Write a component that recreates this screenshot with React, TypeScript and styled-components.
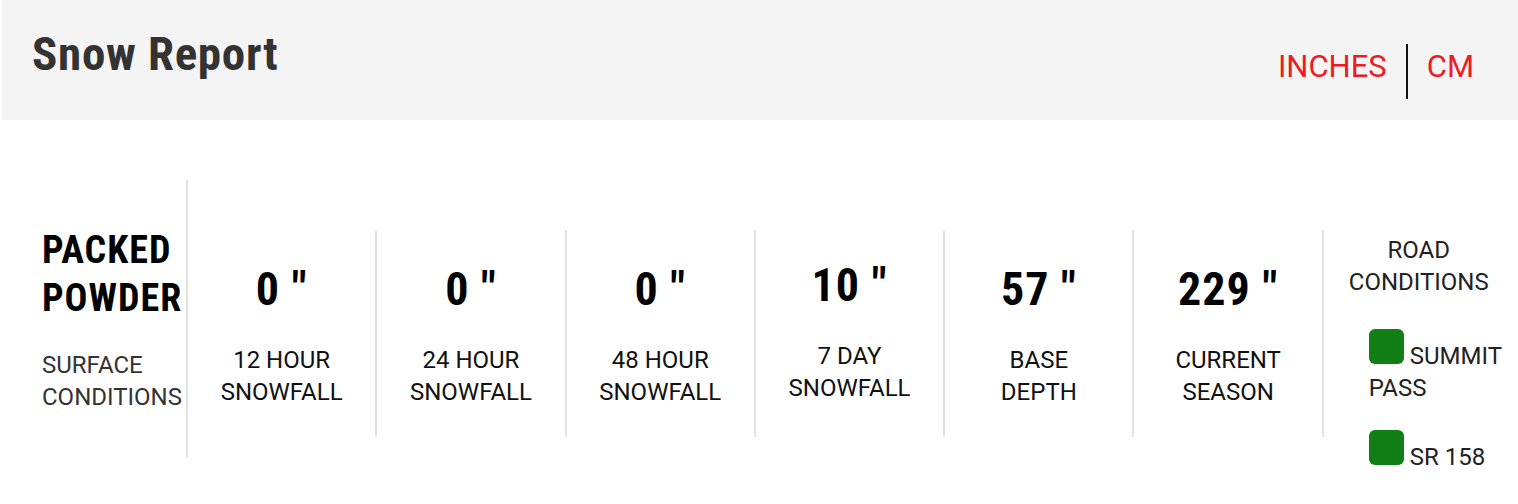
import styled, { createGlobalStyle } from 'styled-components';

const GlobalStyle = createGlobalStyle`
    body {
        margin: 0;
        background: #fff;
        font-family: Roboto, 'Liberation Sans', sans-serif;
    }
`;

const CONDENSED = `'Roboto Condensed', 'Liberation Sans Narrow', Roboto, sans-serif`;

type Stat = { value: string; label: string[]; lift?: boolean };

const STATS: Stat[] = [
    { value: '0 "', label: ['12 HOUR', 'SNOWFALL'] },
    { value: '0 "', label: ['24 HOUR', 'SNOWFALL'] },
    { value: '0 "', label: ['48 HOUR', 'SNOWFALL'] },
    { value: '10 "', label: ['7 DAY', 'SNOWFALL'], lift: true },
    { value: '57 "', label: ['BASE', 'DEPTH'] },
    { value: '229 "', label: ['CURRENT', 'SEASON'] },
];

const ROADS = [
    { name: 'SUMMIT PASS', open: true },
    { name: 'SR 158', open: true },
];

export default function App() {
    return (
        <Page>
            <GlobalStyle />
            <Header>
                <Title>Snow Report</Title>
                <Units>
                    <UnitLink>INCHES</UnitLink>
                    <UnitDivider />
                    <UnitLink>CM</UnitLink>
                </Units>
            </Header>
            <StatsRow>
                <SurfaceCol>
                    <Surface>
                        PACKED
                        <br />
                        POWDER
                    </Surface>
                    <SurfaceLabel>
                        SURFACE
                        <br />
                        CONDITIONS
                    </SurfaceLabel>
                </SurfaceCol>
                {STATS.map((s) => (
                    <StatCol key={s.label.join(' ')} $lift={s.lift}>
                        <Value>{s.value}</Value>
                        <Label>
                            {s.label[0]}
                            <br />
                            {s.label[1]}
                        </Label>
                    </StatCol>
                ))}
                <RoadCol>
                    <Label>
                        ROAD
                        <br />
                        CONDITIONS
                    </Label>
                    <RoadList>
                        {ROADS.map((r) => (
                            <RoadItem key={r.name}>
                                <Status $open={r.open} /> {r.name}
                            </RoadItem>
                        ))}
                    </RoadList>
                </RoadCol>
            </StatsRow>
        </Page>
    );
}

const Page = styled.div`
    width: 1518px;
    padding-left: 2px;
    box-sizing: border-box;
`;

const Header = styled.header`
    height: 120px;
    background: #f4f4f4;
    display: flex;
    justify-content: space-between;
    align-items: flex-start;
    padding: 26px 44px 0 30px;
    box-sizing: border-box;
`;

const Title = styled.h1`
    margin: 0;
    font-family: ${CONDENSED};
    font-weight: 700;
    font-size: 47px;
    letter-spacing: 0.7px;
    color: #333;
`;

const Units = styled.div`
    display: flex;
    align-items: flex-start;
    gap: 19px;
    margin-top: 18px;
`;

const UnitLink = styled.a`
    font-size: 31px;
    color: #ec1c24;
    padding-top: 4px;
    cursor: pointer;
`;

const UnitDivider = styled.span`
    width: 2px;
    height: 55px;
    background: #111;
`;

const StatsRow = styled.section`
    display: flex;
    align-items: flex-start;
    margin-top: 60px;
`;

const SurfaceCol = styled.div`
    width: 186px;
    height: 277px;
    box-sizing: border-box;
    padding: 46px 0 0 40px;
    border-right: 2px solid #e2e2e2;
`;

const Surface = styled.div`
    font-family: ${CONDENSED};
    font-weight: 700;
    font-size: 38px;
    line-height: 48px;
    letter-spacing: 1px;
    color: #000;
`;

const SurfaceLabel = styled.div`
    margin-top: 27px;
    font-size: 24px;
    line-height: 32px;
    color: #333;
`;

const StatCol = styled.div<{ $lift?: boolean }>`
    width: 189.3px;
    height: 207px;
    margin-top: 50px;
    box-sizing: border-box;
    border-right: 2px solid #e2e2e2;
    text-align: center;
    padding-top: ${({ $lift }) => ($lift ? 29 : 33)}px;
`;

const Value = styled.div`
    font-family: ${CONDENSED};
    font-weight: 700;
    font-size: 46px;
    line-height: 53px;
    letter-spacing: 1px;
    color: #000;
`;

const Label = styled.div`
    margin-top: 28px;
    font-size: 24px;
    line-height: 32px;
    color: #111;
`;

const RoadCol = styled.div`
    width: 190px;
    margin-top: 50px;
    padding-top: 4px;
    text-align: center;

    ${Label} {
        margin-top: 0;
        color: #222;
    }
`;

const RoadList = styled.ul`
    list-style: none;
    margin: 31px 0 0;
    padding: 0 6px 0 45px;
    text-align: left;
    display: flex;
    flex-direction: column;
    gap: 26px;
`;

const RoadItem = styled.li`
    font-size: 24px;
    line-height: 32px;
    color: #222;
`;

const Status = styled.span<{ $open: boolean }>`
    display: inline-block;
    width: 35px;
    height: 35px;
    border-radius: 6px;
    background: ${({ $open }) => ($open ? '#117f15' : '#d0021b')};
`;
